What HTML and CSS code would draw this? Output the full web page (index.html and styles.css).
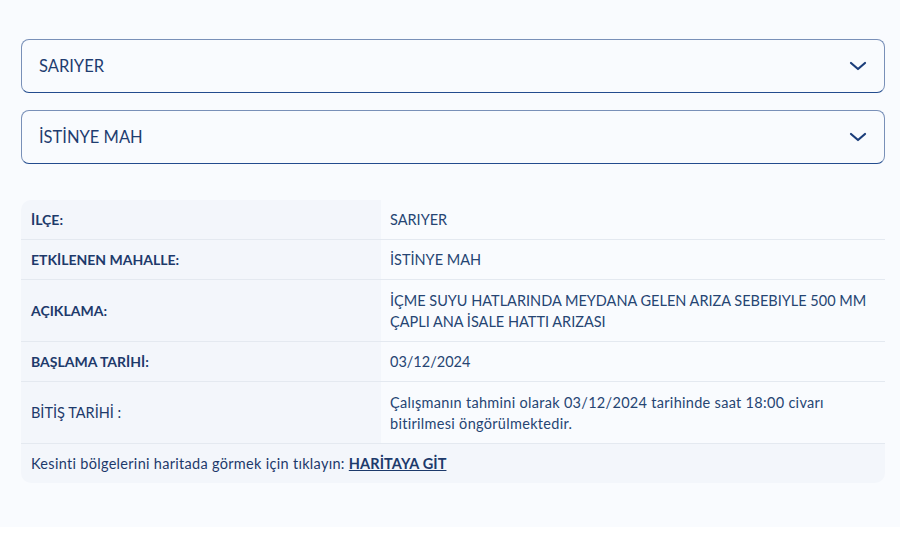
FILE: index.html
```html
<!DOCTYPE html>
<html lang="tr">
<head>
  <meta charset="utf-8">
  <link rel="stylesheet" href="styles.css">
</head>
<body>

<section class="page">

  <div class="select">
    <span>SARIYER</span>
    <svg class="chevron" width="18" height="10" viewBox="0 0 18 10"><path d="M2 2 L9 8 L16 2" fill="none" stroke="#1b3d7a" stroke-width="2.2" stroke-linecap="round" stroke-linejoin="round"/></svg>
  </div>

  <div class="select">
    <span>İSTİNYE MAH</span>
    <svg class="chevron" width="18" height="10" viewBox="0 0 18 10"><path d="M2 2 L9 8 L16 2" fill="none" stroke="#1b3d7a" stroke-width="2.2" stroke-linecap="round" stroke-linejoin="round"/></svg>
  </div>

  <table class="info">
    <tr>
      <th>İLÇE:</th>
      <td>SARIYER</td>
    </tr>
    <tr>
      <th>ETKİLENEN MAHALLE:</th>
      <td>İSTİNYE MAH</td>
    </tr>
    <tr>
      <th>AÇIKLAMA:</th>
      <td class="tall">İÇME SUYU HATLARINDA MEYDANA GELEN ARIZA SEBEBIYLE 500 MM ÇAPLI ANA İSALE HATTI ARIZASI</td>
    </tr>
    <tr>
      <th>BAŞLAMA TARİHİ:</th>
      <td>03/12/2024</td>
    </tr>
    <tr>
      <th class="light">BİTİŞ TARİHİ :</th>
      <td class="tall text">Çalışmanın tahmini olarak 03/12/2024 tarihinde saat 18:00 civarı bitirilmesi öngörülmektedir.</td>
    </tr>
    <tr class="footer">
      <td colspan="2">Kesinti bölgelerini haritada görmek için tıklayın: <a href="#">HARİTAYA GİT</a></td>
    </tr>
  </table>

</section>

</body>
</html>
```

FILE: styles.css
```css
* {
  box-sizing: border-box;
  margin: 0;
  padding: 0;
  font-family: "Lato", sans-serif;
}
body {
  background-color: white;
  color: #1d3a6b;
}
.page {
  background-color: #f9fbfe;
  padding: 39px 15px 44px 21px;
}
.select {
  display: flex;
  justify-content: space-between;
  align-items: center;
  height: 54px;
  padding: 0 17px 0 17px;
  border: 1px solid #7990b8;
  border-bottom-color: #234c8e;
  border-radius: 8px;
  font-size: 16.5px;
  color: #1f3d70;
  margin-bottom: 17px;
}
.select .chevron {
  display: block;
}
.info {
  margin-top: 36px;
  width: 100%;
  border-collapse: collapse;
  border-radius: 10px;
  overflow: hidden;
  font-size: 14.5px;
}
.info th,
.info td {
  text-align: left;
  vertical-align: middle;
  border-bottom: 1px solid #e4e9f0;
  line-height: 21px;
}
.info th {
  width: 360px;
  background-color: #f3f6fb;
  font-size: 14px;
  font-weight: 700;
  padding: 9px 10px;
  color: #1d3a6b;
}
.info th.light {
  font-weight: 400;
  font-size: 14.5px;
}
.info td {
  padding: 9px 18px 9px 9px;
  color: #264573;
}
.info td.tall {
  padding-top: 9.5px;
  padding-bottom: 9.5px;
}
.info td.text {
  letter-spacing: 0.3px;
}
.info .footer td {
  background-color: #f3f6fb;
  border-bottom: none;
  padding: 9px 10px;
  color: #1d3a6b;
  letter-spacing: 0.3px;
}
.info .footer a {
  color: #1d3a6b;
  font-weight: 700;
  letter-spacing: 0.1px;
}
```
